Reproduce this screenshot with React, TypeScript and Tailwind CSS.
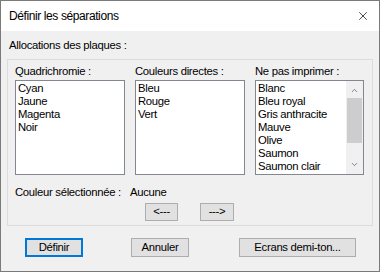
import { X, ChevronUp, ChevronDown } from "lucide-react";

const quadri = ["Cyan", "Jaune", "Magenta", "Noir"];
const directes = ["Bleu", "Rouge", "Vert"];
const nePas = ["Blanc", "Bleu royal", "Gris anthracite", "Mauve", "Olive", "Saumon", "Saumon clair"];

function ListBox({ items, scroll }: { items: string[]; scroll?: boolean }) {
  return (
    <div className="h-[95px] border border-[#828790] bg-white flex overflow-hidden">
      <div className="flex-1 pl-[2px] pt-[1px]">
        {items.map(i => (
          <div key={i} className="leading-[13px] whitespace-nowrap">{i}</div>
        ))}
      </div>
      {scroll && (
        <div className="w-[17px] bg-[#f0f0f0] flex flex-col items-center">
          <ChevronUp size={9} strokeWidth={2} className="text-[#606060] mt-[5px]" />
          <div className="w-[15px] h-[45px] bg-[#cdcdcd] mt-[3px]" />
          <div className="flex-1" />
          <ChevronDown size={9} strokeWidth={2} className="text-[#606060] mb-[5px]" />
        </div>
      )}
    </div>
  );
}

export default function App() {
  return (
    <div
      className="w-[380px] h-[273px] bg-white overflow-hidden text-black text-[11.3px] tracking-[-0.3px]"
      style={{ fontFamily: '"Liberation Sans", Arial, sans-serif' }}
    >
      <div className="h-[272px] border border-[#7a7a7a] flex flex-col bg-[#f0f0f0]">
        <div className="h-[30px] bg-white flex items-center justify-between pl-[8px] pr-[9px]">
          <span className="text-[12px] leading-[14px] tracking-[-0.4px]">Définir les séparations</span>
          <X size={14} strokeWidth={1.2} className="text-black" />
        </div>

        <div className="flex-1 px-[6px]">
          <div className="pt-[8px] pl-[2px] leading-[13px]">Allocations des plaques :</div>

          <div className="mt-[7px] h-[167px] border border-[#dcdcdc] pl-[7px] pt-[5px]">
            <div className="grid grid-cols-[110px_110px_109px] gap-x-[10px]">
              <div>
                <div className="leading-[13px]">Quadrichromie :</div>
                <div className="mt-[2px]">
                  <ListBox items={quadri} />
                </div>
              </div>
              <div>
                <div className="leading-[13px]">Couleurs directes :</div>
                <div className="mt-[2px]">
                  <ListBox items={directes} />
                </div>
              </div>
              <div>
                <div className="leading-[13px]">Ne pas imprimer :</div>
                <div className="mt-[2px]">
                  <ListBox items={nePas} scroll />
                </div>
              </div>
            </div>

            <div className="flex mt-[11px] leading-[13px]">
              <span className="w-[115px]">Couleur sélectionnée :</span>
              <span>Aucune</span>
            </div>

            <div className="flex gap-[22px] ml-[130px] mt-[4px]">
              <button className="w-[33px] h-[18px] border border-[#adadad] bg-[#e1e1e1] flex items-center justify-center leading-none">
                &lt;---
              </button>
              <button className="w-[34px] h-[18px] border border-[#adadad] bg-[#e1e1e1] flex items-center justify-center leading-none">
                ---&gt;
              </button>
            </div>
          </div>

          <div className="flex mt-[12px]">
            <button className="ml-[18px] w-[58px] h-[19px] border-2 border-[#0078d7] bg-[#e1e1e1] flex items-center justify-center leading-none">
              Définir
            </button>
            <button className="ml-[48px] w-[58px] h-[19px] border border-[#adadad] bg-[#e1e1e1] flex items-center justify-center leading-none">
              Annuler
            </button>
            <button className="ml-[50px] w-[117px] h-[19px] border border-[#adadad] bg-[#e1e1e1] flex items-center justify-center leading-none">
              Ecrans demi-ton...
            </button>
          </div>
        </div>
      </div>
    </div>
  );
}
